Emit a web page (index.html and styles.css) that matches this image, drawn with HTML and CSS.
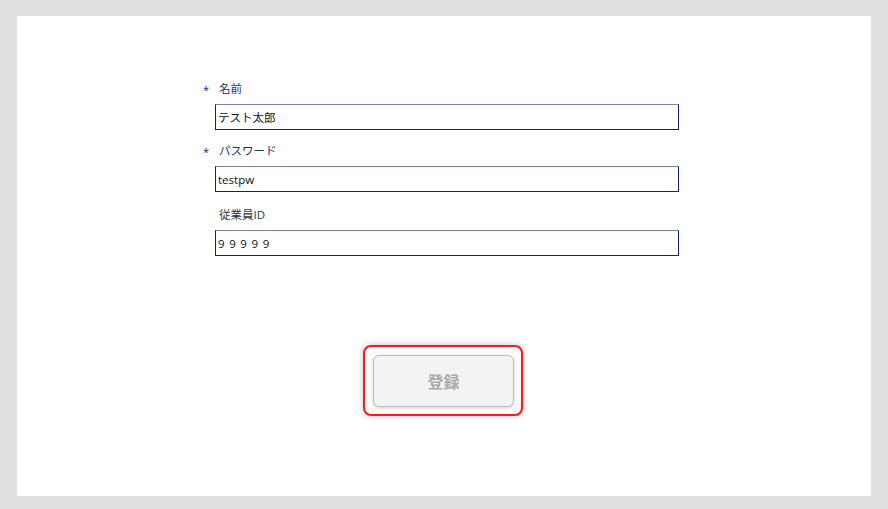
FILE: index.html
```html
<!DOCTYPE html>
<html lang="ja">
<head>
<meta charset="utf-8">
<link rel="stylesheet" href="styles.css">
</head>
<body>
<div class="panel">
  <form class="form">
    <div class="field">
      <div class="label required"><span class="mark">*</span>名前</div>
      <input class="input" type="text" value="テスト太郎">
    </div>
    <div class="field">
      <div class="label required"><span class="mark">*</span>パスワード</div>
      <input class="input" type="text" value="testpw">
    </div>
    <div class="field">
      <div class="label"><span class="mark"></span>従業員ID</div>
      <input class="input spaced" type="text" value="99999">
    </div>
  </form>
  <div class="actions">
    <div class="focus-ring">
      <button class="btn" type="button">登録</button>
    </div>
  </div>
</div>
</body>
</html>
```

FILE: styles.css
```css
* { box-sizing: border-box; }
html, body { margin: 0; padding: 0; }
body {
  background: #e0e0e0;
  padding: 16px 17px 13px 17px;
  font-family: "Open Sans", "Noto Sans CJK JP", sans-serif;
  font-size: 12px;
}
.panel {
  background: #ffffff;
  height: 480px;
  padding-top: 65px;
}
.form {
  margin-left: 186px;
  width: 476px;
  display: flex;
  flex-direction: column;
  gap: 13px;
}
.field {
  display: flex;
  flex-direction: column;
}
.label {
  display: flex;
  align-items: center;
  height: 16px;
  line-height: 16px;
  margin-bottom: 7px;
  color: #333333;
  font-size: 11.5px;
}
.label.required { color: #1f2f73; }
.mark {
  display: inline-block;
  width: 16px;
  color: #1a237e;
  font-size: 11px;
  padding-top: 2px;
}
.input {
  margin-left: 12px;
  width: 464px;
  height: 26px;
  border: 1px solid #14206e;
  border-top-color: #7a80ad;
  padding: 0 2px;
  font-family: "Open Sans", "Noto Sans CJK JP", sans-serif;
  font-size: 11.5px;
  color: #111111;
  background: #ffffff;
  outline: none;
}
.field + .field + .field { margin-top: 2px; }
.input.spaced { letter-spacing: 4.6px; }
.actions {
  display: flex;
  justify-content: center;
  margin-top: 89px;
  padding-right: 2px;
}
.focus-ring {
  width: 160px;
  height: 71px;
  border: 2px solid #ff1a1a;
  border-radius: 8px;
  padding: 8px 7px 7px 8px;
  box-shadow: 0 0 6px rgba(0,0,0,0.25);
  background: #fafafa;
}
.btn {
  width: 141px;
  height: 52px;
  border: 1px solid #bcbcbc;
  border-radius: 6px;
  background: #f3f3f3;
  box-shadow: 0 1px 3px rgba(0,0,0,0.15);
  color: #a9a9a9;
  font-family: "Noto Sans CJK JP", sans-serif;
  font-weight: 700;
  font-size: 16px;
  padding: 0;
}
```
